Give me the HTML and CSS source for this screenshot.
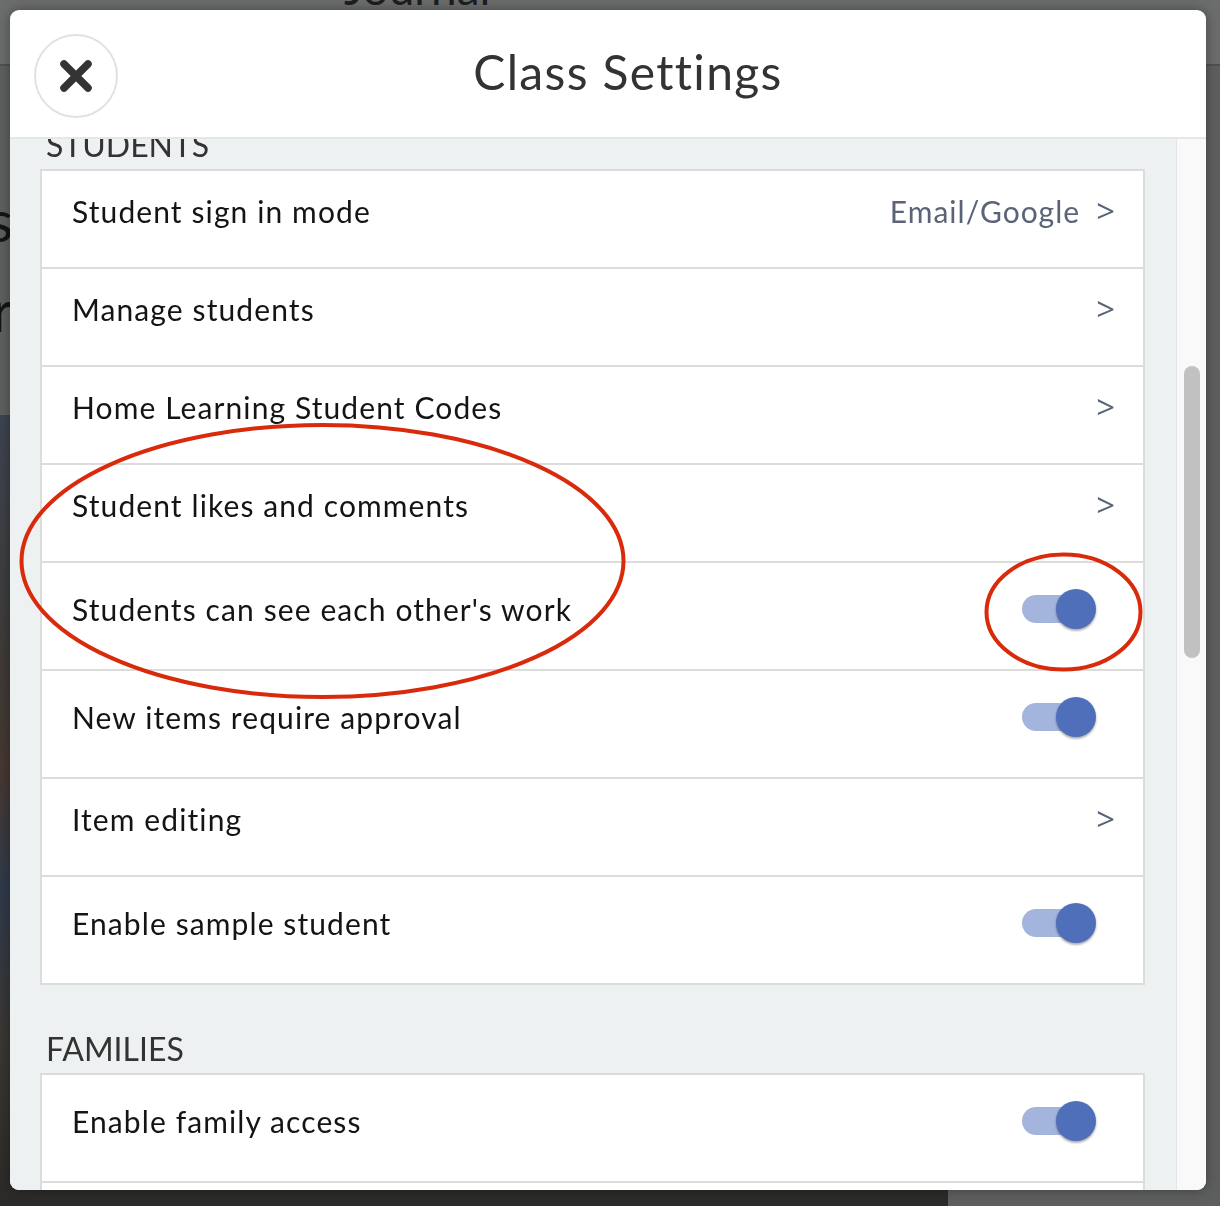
FILE: index.html
```html
<!DOCTYPE html>
<html lang="en">
<head>
<meta charset="utf-8">
<title>Class Settings</title>
<link rel="stylesheet" href="styles.css">
</head>
<body>
<div class="backdrop">
  <div class="bg-top"><span class="bg-journal">Journal</span></div>
  <div class="bg-main">
    <div class="bg-lines">
      <span class="bg-line">Lessons</span>
      <span class="bg-line">Teacher</span>
    </div>
    <div class="bg-photo"></div>
  </div>
</div>

<div class="modal">
  <header class="modal-head">
    <button class="close" aria-label="Close">
      <svg viewBox="0 0 32 32" width="32" height="32"><path d="M4 4L28 28M28 4L4 28" stroke="#333" stroke-width="7.5" stroke-linecap="round" fill="none"/></svg>
    </button>
    <h1 class="title">Class Settings</h1>
  </header>
  <div class="modal-body">
    <div class="scroll">
      <div class="scroll-inner">
        <section class="group">
          <h2 class="group-title">Students</h2>
          <ul class="list">
            <li class="row"><span class="label">Student sign in mode</span><span class="value">Email/Google</span><span class="chev">&gt;</span></li>
            <li class="row"><span class="label">Manage students</span><span class="chev">&gt;</span></li>
            <li class="row"><span class="label">Home Learning Student Codes</span><span class="chev">&gt;</span></li>
            <li class="row"><span class="label">Student likes and comments</span><span class="chev">&gt;</span></li>
            <li class="row row-toggle"><span class="label">Students can see each other's work</span><span class="switch"><span class="track"></span><span class="knob"></span></span></li>
            <li class="row row-toggle"><span class="label">New items require approval</span><span class="switch"><span class="track"></span><span class="knob"></span></span></li>
            <li class="row"><span class="label">Item editing</span><span class="chev">&gt;</span></li>
            <li class="row row-toggle"><span class="label">Enable sample student</span><span class="switch"><span class="track"></span><span class="knob"></span></span></li>
          </ul>
        </section>
        <section class="group group-next">
          <h2 class="group-title">Families</h2>
          <ul class="list">
            <li class="row row-toggle"><span class="label">Enable family access</span><span class="switch"><span class="track"></span><span class="knob"></span></span></li>
            <li class="row row-toggle"><span class="label">Family messaging</span><span class="switch"><span class="track"></span><span class="knob"></span></span></li>
          </ul>
        </section>
      </div>
    </div>
    <div class="scrollbar"><div class="thumb"></div></div>
  </div>
</div>

<svg class="annotations" width="1220" height="1206" viewBox="0 0 1220 1206">
  <ellipse cx="322.5" cy="561" rx="301" ry="136" fill="none" stroke="#d92b0c" stroke-width="4"/>
  <ellipse cx="1063.5" cy="612" rx="77" ry="57.5" fill="none" stroke="#d92b0c" stroke-width="4"/>
</svg>
</body>
</html>
```
FILE: styles.css
```css
* { box-sizing: border-box; }

html, body {
  margin: 0;
  padding: 0;
}

body {
  width: 1220px;
  height: 1206px;
  overflow: hidden;
  position: relative;
  background: #5e6060;
  font-family: Lato, "Open Sans", sans-serif;
}

/* ---------- dimmed page behind the dialog ---------- */
.backdrop {
  display: flex;
  flex-direction: column;
  height: 100%;
}

.bg-top {
  flex: none;
  height: 66px;
  background: #6b6c6c;
  border-bottom: 2px solid #4f5050;
  overflow: hidden;
  padding-left: 344px;
}

.bg-journal {
  display: block;
  font-size: 46px;
  line-height: 46px;
  margin-top: -35px;
  color: #1d1e1e;
}

.bg-main {
  flex: 1;
  display: flex;
  flex-direction: column;
  background: #5d5f5e;
}

.bg-lines {
  flex: none;
  width: 13px;
  height: 349px;
  overflow: hidden;
  display: flex;
  flex-direction: column;
  align-items: flex-end;
  padding-top: 124px;
  gap: 30px;
  font-size: 58px;
  line-height: 60px;
  color: #131414;
}

.bg-line { white-space: nowrap; }

.bg-photo {
  flex: 1;
  width: 948px;
  background:
    linear-gradient(180deg, #3c4450 0%, #3e3a38 30%, #463830 45%, #2f3a4a 60%, #3a3631 80%, #2b2a28 100%);
}

/* ---------- dialog ---------- */
.modal {
  position: fixed;
  top: 10px;
  left: 10px;
  width: 1196px;
  height: 1180px;
  background: #fff;
  border-radius: 9px;
  overflow: hidden;
  display: flex;
  flex-direction: column;
  box-shadow: 0 0 12px rgba(0, 0, 0, 0.35);
}

.modal-head {
  flex: none;
  height: 129px;
  display: flex;
  align-items: flex-start;
  padding-left: 24px;
  padding-right: 68px;
  border-bottom: 2px solid #e4e6e8;
}

.close {
  flex: none;
  width: 84px;
  height: 84px;
  margin-top: 24px;
  padding: 0;
  border: 2px solid #e0e2e6;
  border-radius: 50%;
  background: #fff;
  display: flex;
  align-items: center;
  justify-content: center;
}

.close svg { display: block; }

.title {
  flex: 1;
  margin: 33px 0 0;
  text-align: center;
  font-size: 48px;
  line-height: 57.6px;
  font-weight: 400;
  letter-spacing: 1.35px;
  color: #333;
}

.modal-body {
  flex: 1;
  min-height: 0;
  display: flex;
}

.scroll {
  flex: 1;
  min-width: 0;
  overflow: hidden;
  background: #edf1f2;
}

.scroll-inner {
  margin-top: -14px;
}

.group-next { margin-top: 44px; }

.group-title {
  margin: 0 0 4px;
  padding-left: 36px;
  font-size: 32px;
  line-height: 40px;
  font-weight: 400;
  text-transform: uppercase;
  color: #333;
}

.list {
  list-style: none;
  margin: 0 31px 0 30px;
  padding: 0;
  background: #fff;
  border: 2px solid #dcdcdc;
}

.row {
  display: flex;
  align-items: center;
  height: 98px;
  padding: 0 28px 16px 30px;
  border-top: 2px solid #dcdcdc;
  font-size: 30px;
  line-height: 36px;
  color: #141414;
}

.row:first-child {
  height: 96px;
  border-top: 0;
}

.row-toggle {
  height: 108px;
  padding-bottom: 14px;
}

.row-toggle:first-child { height: 106px; }

.label {
  flex: 1;
  white-space: nowrap;
  letter-spacing: 1.1px;
}

.value {
  color: #5b6476;
  margin-right: 16px;
  letter-spacing: 1px;
}

.chev {
  color: #5b6476;
  font-family: "Open Sans", Lato, sans-serif;
  font-size: 33px;
  line-height: 36px;
}

/* switch */
.switch {
  display: flex;
  align-items: center;
  width: 80px;
  height: 40px;
  margin-right: 19px;
}

.track {
  flex: none;
  width: 68px;
  height: 28px;
  margin-left: 6px;
  border-radius: 14px;
  background: #a4b5dd;
}

.knob {
  flex: none;
  width: 40px;
  height: 40px;
  margin-left: -34px;
  border-radius: 50%;
  background: #4f6fbb;
  box-shadow: 0 2px 2px rgba(0, 0, 0, 0.2), 0 1px 3px rgba(0, 0, 0, 0.2);
}

/* scrollbar */
.scrollbar {
  flex: none;
  width: 30px;
  background: #f9f9f9;
  border-left: 1px solid #e3e5e6;
  padding: 227px 6px 0 7px;
}

.thumb {
  height: 292px;
  border-radius: 8px;
  background: #c1c1c1;
}

/* screenshot annotations */
.annotations {
  position: fixed;
  top: 0;
  left: 0;
  pointer-events: none;
}
```
